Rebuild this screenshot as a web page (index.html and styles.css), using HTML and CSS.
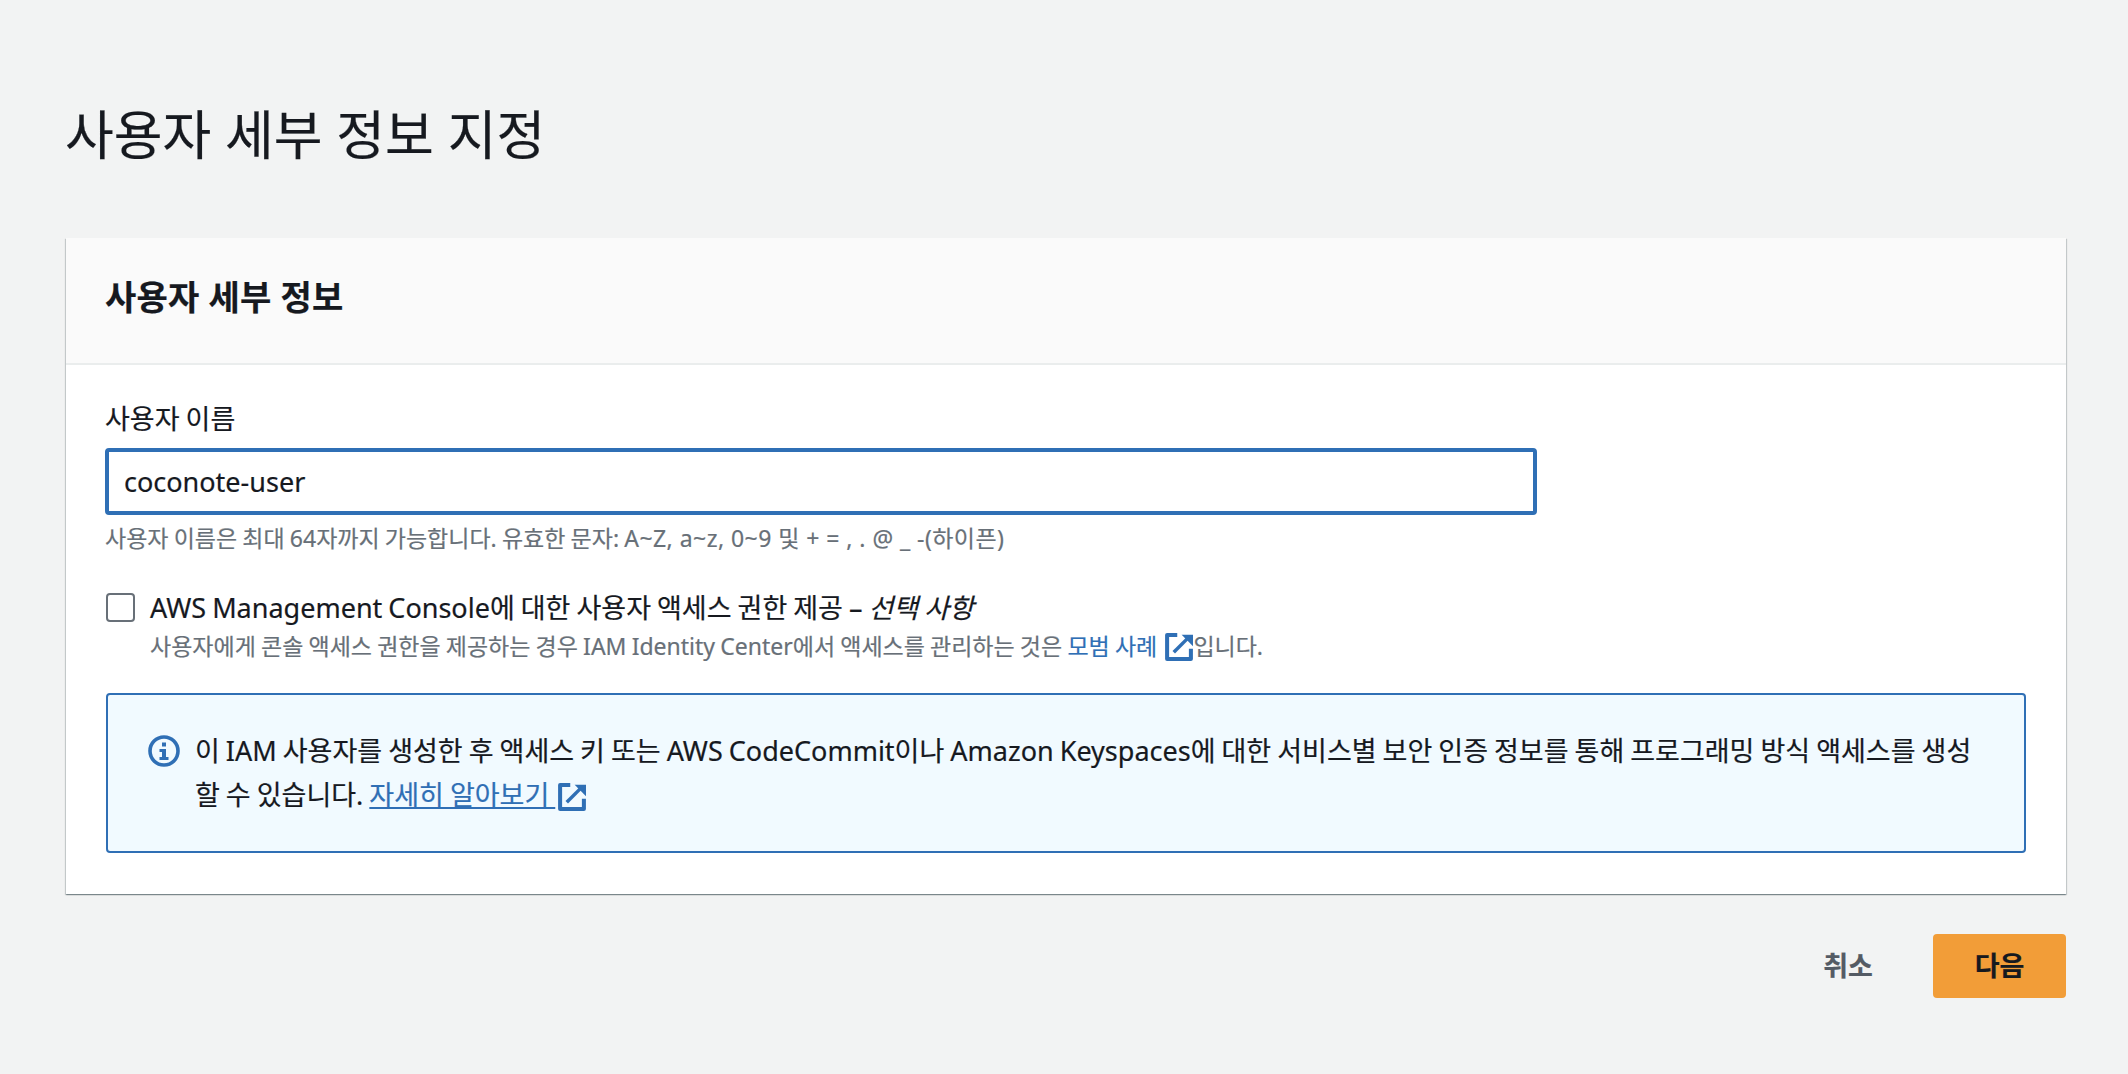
FILE: index.html
```html
<!DOCTYPE html>
<html lang="ko">
<head>
<meta charset="utf-8">
<title>사용자 세부 정보 지정</title>
<link rel="stylesheet" href="styles.css">
</head>
<body>
<main class="page">
  <h1 class="page-title">사용자 세부 정보 지정</h1>
  <section class="card">
    <header class="card-header"><h2 class="card-title">사용자 세부 정보</h2></header>
    <div class="card-body">
      <div class="field">
        <label class="field-label" for="username">사용자 이름</label>
        <input class="text-input" id="username" type="text" value="coconote-user">
        <p class="hint">사용자 이름은 최대 64자까지 가능합니다. 유효한 문자: <span class="hint-chars">A~Z, a~z, 0~9 및 + = , . @ _ -(하이픈)</span></p>
      </div>
      <div class="check-row">
        <span class="checkbox"></span>
        <div class="check-text">
          <div class="check-label">AWS Management Console에 대한 사용자 액세스 권한 제공 – <em class="optional">선택 사항</em></div>
          <p class="check-desc">사용자에게 콘솔 액세스 권한을 제공하는 경우 IAM Identity Center에서 액세스를 관리하는 것은 <a class="plain-link" href="#">모범 사례 <svg class="ext-icon desc-ext" viewBox="0 0 16 16"><path d="M7 1.200H1.200v13.600h13.600V9" fill="none" stroke="currentColor" stroke-width="2.300" stroke-linejoin="round"/><path d="M5 11 13.500 2.500" fill="none" stroke="currentColor" stroke-width="2"/><path d="M9.500 1H16V7.500z" fill="currentColor"/></svg></a>입니다.</p>
        </div>
      </div>
      <div class="alert">
        <svg class="info-icon" viewBox="0 0 32 32"><circle cx="16" cy="16" r="14" fill="none" stroke="currentColor" stroke-width="3.600"/><rect x="14" y="7.500" width="4" height="4" fill="currentColor"/><path d="M11.500 14h6.500v8h2.500v3h-9v-3h2.500v-5h-2.500z" fill="currentColor"/></svg>
        <p class="alert-text">이 IAM 사용자를 생성한 후 액세스 키 또는 AWS CodeCommit이나 Amazon Keyspaces에 대한 서비스별 보안 인증 정보를 통해 프로그래밍 방식 액세스를 생성할 수 있습니다. <a class="under-link" href="#">자세히 알아보기 </a><svg class="ext-icon alert-ext" viewBox="0 0 16 16"><path d="M7 1.200H1.200v13.600h13.600V9" fill="none" stroke="currentColor" stroke-width="2.300" stroke-linejoin="round"/><path d="M5 11 13.500 2.500" fill="none" stroke="currentColor" stroke-width="2"/><path d="M9.500 1H16V7.500z" fill="currentColor"/></svg></p>
      </div>
    </div>
  </section>
  <footer class="actions">
    <button class="btn-cancel" type="button">취소</button>
    <button class="btn-next" type="button">다음</button>
  </footer>
</main>
</body>
</html>
```
FILE: styles.css
```css
* { box-sizing: border-box; }
html, body { margin: 0; height: 100%; overflow: hidden; }
body {
  background: #f2f3f3;
  color: #16191f;
  font-family: "Noto Sans", "Noto Sans CJK KR", sans-serif;
  font-size: 27px;
  word-spacing: -1px;
  -webkit-text-stroke: .2px currentColor;
}
p, h1, h2 { margin: 0; }
.page { padding: 0 62px 0 66px; }
.page-title {
  font-size: 53px;
  font-weight: 400;
  line-height: 70px;
  padding: 100px 0 0;
  margin-left: -1px;
  height: 238px;
  word-spacing: 0;
}
.card {
  background: #fff;
  box-shadow: 0 1px 1px 0 rgba(0,28,36,.3), 1px 1px 1px 0 rgba(0,28,36,.15), -1px 1px 1px 0 rgba(0,28,36,.15);
  height: 656px;
}
.card-header {
  background: #fafafa;
  border-bottom: 2px solid #eaeded;
  height: 127px;
  padding: 0 39px 10px;
  display: flex;
  align-items: center;
}
.card-title { font-size: 34px; font-weight: 700; word-spacing: 0; letter-spacing: .2px; }
.card-body { padding: 35px 40px 0 39px; }
.field-label { display: block; font-size: 27px; line-height: 38px; }
.text-input {
  display: block;
  width: 1432px;
  height: 67px;
  margin-top: 10px;
  padding: 0 15px;
  border: 4px solid #2f6fb5;
  border-radius: 4px;
  font: inherit;
  color: #16191f;
  outline: none;
  background: #fff;
}
.hint { font-size: 23px; line-height: 34px; color: #687078; margin-top: 6px; word-spacing: -.8px; }
.hint-chars { letter-spacing: .45px; word-spacing: 0; }
.check-row { display: flex; gap: 15px; margin-top: 34px; }
.checkbox {
  flex: none;
  width: 29px;
  height: 29px;
  margin: 4px 0 0 1px;
  border: 2px solid #687078;
  border-radius: 4px;
  background: #fff;
}
.check-label { line-height: 38px; }
.optional { font-style: italic; }
.check-desc { font-size: 23px; line-height: 34px; color: #687078; margin-top: 2px; word-spacing: -.8px; }
.plain-link { color: #2f6fb5; text-decoration: none; }
.ext-icon { width: 28px; height: 28px; vertical-align: -6px; }
.desc-ext { margin-left: 3px; }
.alert {
  display: flex;
  align-items: flex-start;
  gap: 15px;
  margin: 30px 0 0 1px;
  height: 160px;
  padding: 34px 40px 0 40px;
  background: #f1faff;
  border: 2px solid #2f6fb5;
  border-radius: 4px;
  color: #16191f;
}
.info-icon { flex: none; width: 32px; height: 32px; color: #2f6fb5; margin-top: 6px; }
.alert-text { line-height: 44px; }
.under-link { color: #2f6fb5; text-decoration: underline; }
.alert-ext { color: #2f6fb5; margin-left: 3px; }
.actions {
  display: flex;
  justify-content: flex-end;
  align-items: center;
  gap: 39px;
  margin-top: 40px;
}
.btn-cancel, .btn-next {
  font: inherit;
  font-weight: 700;
  border: 0;
  height: 64px;
  border-radius: 4px;
  cursor: pointer;
  padding: 0 0 3px;
}
.btn-cancel { background: transparent; color: #545b64; width: 92px; }
.btn-next { background: #f29d38; color: #16191f; width: 133px; }
```
